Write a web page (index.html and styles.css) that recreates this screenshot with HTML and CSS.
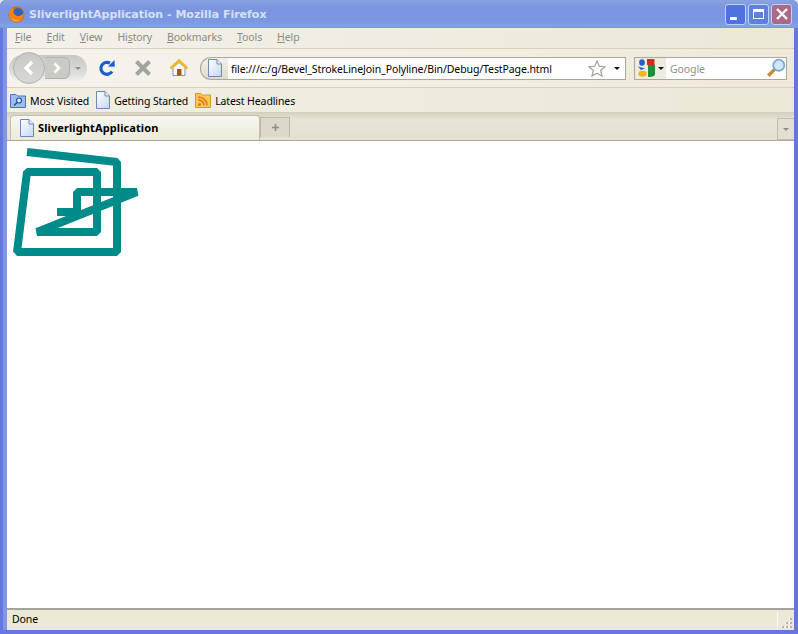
FILE: index.html
```html
<!DOCTYPE html>
<html lang="en">
<head>
    <meta charset="UTF-8">
    <title>SliverlightApplication - Mozilla Firefox</title>
    <link rel="stylesheet" href="styles.css">
</head>
<body>
    <svg class="defs" width="0" height="0">
        <defs>
            <linearGradient id="page-fill" x1="0" y1="0" x2="1" y2="1">
                <stop offset="0" stop-color="#ffffff"/>
                <stop offset="1" stop-color="#c4d6f4"/>
            </linearGradient>
            <symbol id="page" viewBox="0 0 14 18">
                <path d="M.5.5H9L13.5 5V17.5H.5Z" fill="url(#page-fill)" stroke="#6d86bd"/>
                <path d="M9 .5V5H13.5" fill="#e6eefb" stroke="#6d86bd"/>
            </symbol>
        </defs>
    </svg>
    <div class="window">
        <header class="titlebar">
            <svg class="fox" width="17" height="17" viewBox="0 0 18 18">
                <circle cx="9" cy="9" r="8.500" fill="#d9661a"/>
                <circle cx="10.500" cy="7.500" r="5.500" fill="#2f64b4"/>
                <path d="M1 7C1.500 4.500 3 2.500 5 1.500C4.500 3 5.500 3.500 7 3C6 4 5.500 5 6 6.500C6.500 9 9 11 12 10.500C14 10.200 15.500 9 16.500 7.500C17 12 14 17 9 17C4.500 17 1 13.500 1 9Z" fill="#ee8420"/>
                <path d="M3 12C5 15 9 16 12.500 14.500C10 16.800 5 16.500 3 12Z" fill="#f9c440"/>
            </svg>
            <span class="title-text">SliverlightApplication - Mozilla Firefox</span>
            <div class="window-btns">
                <div class="win-btn win-min"><span class="min-glyph"></span></div>
                <div class="win-btn win-max"><span class="max-glyph"></span></div>
                <div class="win-btn win-close">
                    <svg width="14" height="14" viewBox="0 0 14 14"><path d="M2 2L12 12M12 2L2 12" stroke="#fff" stroke-width="2.400"/></svg>
                </div>
            </div>
        </header>
        <div class="frame">
            <nav class="menubar">
                <span><u>F</u>ile</span>
                <span><u>E</u>dit</span>
                <span><u>V</u>iew</span>
                <span>Hi<u>s</u>tory</span>
                <span><u>B</u>ookmarks</span>
                <span><u>T</u>ools</span>
                <span><u>H</u>elp</span>
            </nav>
            <div class="navbar">
                <div class="backforward">
                    <div class="back-btn">
                        <svg width="14" height="16" viewBox="0 0 14 16"><path d="M10 2L4 8L10 14" fill="none" stroke="#fff" stroke-width="3.200"/></svg>
                    </div>
                    <div class="forward-btn">
                        <svg width="10" height="12" viewBox="0 0 10 12"><path d="M2.500 1.500L7 6L2.500 10.500" fill="none" stroke="#fff" stroke-width="2.600"/></svg>
                    </div>
                    <span class="arrow arrow-grey"></span>
                </div>
                <svg class="nav-icon reload" width="18" height="18" viewBox="0 0 18 18">
                    <path d="M14 12.500A6 6 0 1 1 12 4.200" fill="none" stroke="#1a5fc8" stroke-width="3.200"/>
                    <path d="M10 7.500L16.800 7.800L16.500 1Z" fill="#1a5fc8"/>
                </svg>
                <svg class="nav-icon stop" width="18" height="18" viewBox="0 0 18 18">
                    <path d="M2.500 2.500L15.500 15.500M15.500 2.500L2.500 15.500" stroke="#a3a3a0" stroke-width="4"/>
                </svg>
                <svg class="nav-icon home" width="20" height="18" viewBox="0 0 20 18">
                    <path d="M4 8.500V16.500H16V8.500L10 3.500Z" fill="#fdfbf0" stroke="#7f93c4"/>
                    <path d="M1.500 9.500L10 1.500L18.500 9.500" fill="none" stroke="#f3b72c" stroke-width="2.600"/>
                    <rect x="8" y="10" width="4.500" height="6.500" fill="#9a5a22"/>
                </svg>
                <div class="urlbar">
                    <div class="url-identity"><svg width="14" height="18"><use href="#page"/></svg></div>
                    <div class="url-field">
                        <span class="url-text">file:///c:/g/Bevel_StrokeLineJoin_Polyline/Bin/Debug/TestPage.html</span>
                        <svg class="star" width="18" height="17" viewBox="0 0 18 17">
                            <path d="M9 1L11.300 6.200L17 6.800L12.700 10.500L14 16L9 13.200L4 16L5.300 10.500L1 6.800L6.700 6.200Z" fill="#fff" stroke="#a6a6a0" stroke-width="1.300"/>
                        </svg>
                        <span class="arrow"></span>
                    </div>
                </div>
                <div class="searchbar">
                    <div class="engine">
                        <svg width="18" height="18" viewBox="0 0 18 18">
                            <path d="M9 0H16.500V6H9Z" fill="#d8281e"/>
                            <path d="M10 6H17V15C17 17 15 18 10 18Z" fill="#17913a"/>
                            <ellipse cx="4" cy="3.500" rx="2.800" ry="3.200" fill="#2a5fc9"/>
                            <path d="M0 7.500L7 9.500L3 11Z" fill="#2a5fc9"/>
                            <ellipse cx="4.500" cy="14.800" rx="4.200" ry="3" fill="#f1b71c"/>
                        </svg>
                        <span class="arrow"></span>
                    </div>
                    <span class="search-text">Google</span>
                    <svg class="magnifier" width="20" height="20" viewBox="0 0 18 18">
                        <path d="M8 10L2 16" stroke="#c9873a" stroke-width="3"/>
                        <circle cx="11.500" cy="6.500" r="5" fill="#cfe6fb" stroke="#7fa8d4" stroke-width="1.600"/>
                    </svg>
                </div>
            </div>
            <div class="bookmarks">
                <div class="bookmark">
                    <svg width="16" height="16" viewBox="0 0 16 16">
                        <path d="M.5 2.500H6L7.500 4H15.500V15.500H.5Z" fill="#9dbcf0" stroke="#4d72b8"/>
                        <circle cx="9" cy="8.500" r="2.500" fill="#dbe8fb" stroke="#2b4f9c" stroke-width="1.200"/>
                        <path d="M7 10.500L4 13.500" stroke="#2b4f9c" stroke-width="1.600"/>
                    </svg>
                    <span>Most Visited</span>
                </div>
                <div class="bookmark">
                    <svg width="14" height="18"><use href="#page"/></svg>
                    <span>Getting Started</span>
                </div>
                <div class="bookmark">
                    <svg width="16" height="16" viewBox="0 0 16 16">
                        <path d="M.5 1.500H6L7.500 3H15.500V15.500H.5Z" fill="#f8c954" stroke="#d39a2a"/>
                        <circle cx="4.500" cy="12.500" r="1.500" fill="#e8761e"/>
                        <path d="M3 8A5.500 5.500 0 0 1 9 13.500M3 5A8.500 8.500 0 0 1 12 13.500" fill="none" stroke="#e8761e" stroke-width="1.700"/>
                    </svg>
                    <span>Latest Headlines</span>
                </div>
            </div>
            <div class="tabstrip">
                <div class="tab">
                    <svg width="14" height="18"><use href="#page"/></svg>
                    <span>SliverlightApplication</span>
                </div>
                <div class="newtab">
                    <svg width="9" height="9" viewBox="0 0 9 9"><path d="M4.500 1V8M1 4.500H8" stroke="#8f8d84" stroke-width="1.600"/></svg>
                </div>
                <div class="tab-spacer"></div>
                <div class="alltabs"><span class="arrow arrow-grey"></span></div>
            </div>
            <main class="content">
                <svg class="drawing" width="140" height="120" viewBox="0 0 140 120">
                    <polyline points="20,11 110,21 110,111 10,111 20,31 90,31 90,91 30,91 130,51 70,51 70,71 50,71" fill="none" stroke="#008b8b" stroke-width="8" stroke-linejoin="bevel"/>
                </svg>
            </main>
            <footer class="statusbar">
                <span class="status-text">Done</span>
                <div class="grip">
                    <svg width="14" height="12" viewBox="0 0 14 12">
                        <path d="M9 1h2v2H9zM9 5h2v2H9zM5 5h2v2H5zM9 9h2v2H9zM5 9h2v2H5zM1 9h2v2H1z" fill="#fff"/>
                        <path d="M10 1h2v2h-2zM10 5h2v2h-2zM6 5h2v2H6zM10 9h2v2h-2zM6 9h2v2H6zM2 9h2v2H2z" fill="#b5b29f"/>
                    </svg>
                </div>
            </footer>
        </div>
    </div>
</body>
</html>
```
FILE: styles.css
```css
html, body {
    margin: 0;
    padding: 0;
    height: 100%;
    overflow: hidden;
}
body {
    font-family: "Noto Sans", sans-serif;
    font-size: 10.5px;
    letter-spacing: -0.1px;
    color: #000;
    background-color: #e4e4e4;
}
.defs {
    display: block;
    height: 0;
}
svg {
    display: block;
    flex: none;
}
.window {
    display: flex;
    flex-direction: column;
    width: 798px;
    height: 634px;
    border-radius: 6px 6px 0 0;
    overflow: hidden;
    background-color: #6478dc;
}
.titlebar {
    display: flex;
    align-items: center;
    height: 28px;
    padding: 0 6px 0 8px;
    box-sizing: border-box;
    background: linear-gradient(#8aa2e2 0, #7b95e0 8px, #7c98e2 22px, #7fa3e6 26px, #7f93dc 28px);
}
.fox {
    margin-right: 4px;
}
.title-text {
    font-family: "DejaVu Sans", sans-serif;
    font-size: 11px;
    letter-spacing: 0;
    font-weight: bold;
    color: #d6e0f6;
}
.window-btns {
    display: flex;
    gap: 2px;
    margin-left: auto;
}
.win-btn {
    display: flex;
    align-items: center;
    justify-content: center;
    width: 21px;
    height: 21px;
    box-sizing: border-box;
    border: 1px solid #c4d0f2;
    border-radius: 3px;
    background-color: #4f72dc;
}
.win-max {
    background-color: #5f80de;
}
.win-close {
    background-color: #a96a86;
}
.min-glyph {
    width: 7px;
    height: 3px;
    margin: 8px 5px 0 0;
    background-color: #fff;
}
.max-glyph {
    width: 11px;
    height: 10px;
    box-sizing: border-box;
    border: 1px solid #fff;
    border-top-width: 3px;
}
.frame {
    flex: 1;
    min-height: 0;
    display: flex;
    flex-direction: column;
    margin: 0 4px 4px 3px;
    border-left: 4px solid #8296e6;
    background-color: #ece9d8;
}
.menubar {
    display: flex;
    align-items: center;
    gap: 15px;
    height: 21px;
    padding: 0 0 2px 8px;
    box-sizing: border-box;
    color: #8a8a84;
    background: linear-gradient(90deg, #f3f1e9, #ebe8d8);
    border-bottom: 1px solid #d8d2bd;
}
.navbar {
    display: flex;
    align-items: center;
    height: 38px;
    background: linear-gradient(90deg, #f5f3ec, #edeadb);
    border-bottom: 1px solid #d8d2bd;
}
.backforward {
    display: flex;
    align-items: center;
    width: 78px;
    height: 27px;
    margin-left: 2px;
    box-sizing: border-box;
    border-radius: 14px;
    background: linear-gradient(#c9c9c3, #dededa 70%, #f2f2ee);
}
.back-btn {
    display: flex;
    align-items: center;
    justify-content: center;
    width: 32px;
    height: 32px;
    margin-left: 4px;
    border-radius: 50%;
    box-sizing: border-box;
    border: 1px solid #b4b4ae;
    background: linear-gradient(#c8c8c4, #d8d8d4);
    flex: none;
}
.forward-btn {
    display: flex;
    align-items: center;
    justify-content: center;
    width: 25px;
    height: 22px;
    box-sizing: border-box;
    border: 1px solid #b4b4ae;
    border-left: none;
    border-radius: 0 6px 6px 0;
    background-color: #cbcbc6;
    flex: none;
}
.arrow {
    display: block;
    flex: none;
    width: 0;
    height: 0;
    border-style: solid;
    border-width: 3px 3px 0;
    border-color: #111 transparent transparent;
}
.arrow-grey {
    border-top-color: #8d8d88;
}
.backforward .arrow {
    margin-left: 5px;
}
.nav-icon.reload {
    margin-left: 11px;
}
.nav-icon.stop {
    margin-left: 18px;
}
.nav-icon.home {
    margin-left: 17px;
}
.urlbar {
    display: flex;
    width: 426px;
    height: 23px;
    margin-left: 11px;
    box-sizing: border-box;
}
.url-identity {
    display: flex;
    align-items: center;
    justify-content: center;
    width: 28px;
    box-sizing: border-box;
    border: 1px solid #aca899;
    border-right: none;
    border-radius: 11px 0 0 11px;
    background: linear-gradient(#f3f1e8, #dfdccb);
}
.url-field {
    flex: 1;
    display: flex;
    align-items: center;
    padding: 0 5px 0 3px;
    box-sizing: border-box;
    border: 1px solid #aca899;
    border-left: none;
    background-color: #fff;
}
.url-text {
    flex: 1;
    padding-top: 1px;
}
.star {
    margin-right: 8px;
}
.searchbar {
    display: flex;
    align-items: center;
    width: 153px;
    height: 23px;
    margin-left: 8px;
    box-sizing: border-box;
    border: 1px solid #aca899;
    background-color: #fff;
}
.engine {
    display: flex;
    align-items: center;
    gap: 2px;
    height: 100%;
    width: 31px;
    padding-left: 3px;
    box-sizing: border-box;
    background-color: #eeebdf;
}
.search-text {
    flex: 1;
    padding: 1px 0 0 4px;
    color: #8f8f8a;
}
.bookmarks {
    display: flex;
    align-items: center;
    height: 24px;
    padding-left: 3px;
    background: linear-gradient(90deg, #f1efe4, #ebe8d8);
}
.bookmark {
    display: flex;
    align-items: center;
    gap: 4px;
    margin-right: 7px;
}
.bookmark span {
    padding-top: 1px;
}
.tabstrip {
    display: flex;
    align-items: flex-end;
    height: 29px;
    box-sizing: border-box;
    padding-left: 3px;
    background: linear-gradient(#d3cfbf, #e8e5d6 8px, #e4e1d2);
    border-bottom: 1px solid #aca899;
}
.tab {
    display: flex;
    align-items: center;
    gap: 4px;
    width: 250px;
    height: 25px;
    padding: 0 0 1px 9px;
    box-sizing: border-box;
    font-size: 11px;
    letter-spacing: 0.1px;
    font-weight: bold;
    border: 1px solid #c2bfae;
    border-bottom: none;
    border-radius: 4px 4px 0 0;
    background: linear-gradient(#f8f7f1, #ecead9);
}
.newtab {
    display: flex;
    align-items: center;
    justify-content: center;
    width: 30px;
    height: 20px;
    margin: 0 0 3px;
    box-sizing: border-box;
    border: 1px solid #bdbaa9;
    border-bottom: none;
    background-color: #dcd9ca;
}
.tab-spacer {
    flex: 1;
}
.alltabs {
    display: flex;
    align-items: center;
    justify-content: center;
    width: 17px;
    height: 22px;
    box-sizing: border-box;
    border: 1px solid #c2bfae;
    border-right: none;
    background-color: #e3e0d1;
}
.content {
    flex: 1;
    min-height: 0;
    background-color: #fff;
}
.statusbar {
    display: flex;
    align-items: center;
    height: 22px;
    box-sizing: border-box;
    padding: 0 0 3px 5px;
    background-color: #ebe8d6;
    border-top: 2px solid #a3a39b;
}
.status-text {
    flex: 1;
}
.grip {
    display: flex;
    align-items: flex-end;
    justify-content: flex-end;
    width: 17px;
    height: 100%;
    margin-bottom: -3px;
    box-sizing: border-box;
    border-left: 1px solid #fbfaf4;
}
```
